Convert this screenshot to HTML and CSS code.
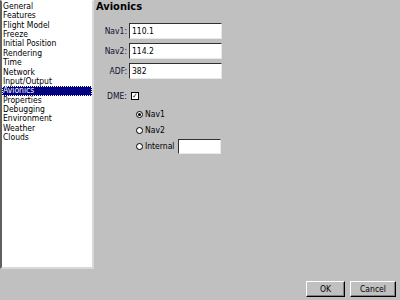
FILE: index.html
```html
<!DOCTYPE html>
<html lang="en">
<head>
    <meta charset="UTF-8">
    <title>Preferences</title>
    <link rel="stylesheet" href="styles.css">
</head>
<body>
    <div class="dialog">
        <div class="main">
            <div class="category-list">
                <div class="item">General</div>
                <div class="item">Features</div>
                <div class="item">Flight Model</div>
                <div class="item">Freeze</div>
                <div class="item">Initial Position</div>
                <div class="item">Rendering</div>
                <div class="item">Time</div>
                <div class="item">Network</div>
                <div class="item">Input/Output</div>
                <div class="item selected">Avionics</div>
                <div class="item">Properties</div>
                <div class="item">Debugging</div>
                <div class="item">Environment</div>
                <div class="item">Weather</div>
                <div class="item">Clouds</div>
            </div>

            <div class="panel">
                <div class="panel-title">Avionics</div>

                <div class="fields">
                    <label class="field-label">Nav1:</label>
                    <div class="text-field">110.1</div>
                    <label class="field-label">Nav2:</label>
                    <div class="text-field">114.2</div>
                    <label class="field-label">ADF:</label>
                    <div class="text-field">382</div>
                </div>

                <div class="dme-row">
                    <span class="field-label">DME:</span>
                    <span class="checkbox">&#10003;</span>
                </div>

                <div class="radio-group">
                    <div class="radio-row"><span class="radio checked"></span>Nav1</div>
                    <div class="radio-row"><span class="radio"></span>Nav2</div>
                    <div class="radio-row"><span class="radio"></span>Internal<div class="text-field small"></div></div>
                </div>
            </div>
        </div>

        <div class="button-bar">
            <button class="btn">OK</button>
            <button class="btn">Cancel</button>
        </div>
    </div>
</body>
</html>
```

FILE: styles.css
```css
* {
    margin: 0;
    padding: 0;
    box-sizing: border-box;
}

body {
    font-family: 'DejaVu Sans Condensed', 'DejaVu Sans', sans-serif;
    font-size: 8.5px;
    background: #c0c0c0;
    color: #000000;
    width: 400px;
    height: 300px;
    overflow: hidden;
}

.dialog {
    display: flex;
    flex-direction: column;
    height: 300px;
}

.main {
    display: flex;
    height: 269px;
}

.category-list {
    width: 94px;
    height: 269px;
    background: #ffffff;
    border-left: 2px solid #606060;
    border-top: 1px solid #ffffff;
    border-right: 2px solid #d8d8d8;
    border-bottom: 2px solid #d8d8d8;
    padding-top: 1px;
}

.item {
    height: 9.36px;
    line-height: 9.36px;
    padding-left: 1px;
    white-space: nowrap;
}

.item.selected {
    background: #000080;
    color: #ffffff;
    outline: 1px dotted #ffffff;
    outline-offset: -1px;
}

.panel {
    flex: 1;
    padding-left: 2px;
}

.panel-title {
    font-size: 11px;
    font-weight: bold;
    height: 13px;
    line-height: 13px;
}

.fields {
    display: grid;
    grid-template-columns: 33px 93px;
    row-gap: 4px;
    align-items: center;
    margin-top: 10px;
}

.field-label {
    text-align: right;
    padding-right: 2px;
    color: #101030;
}

.text-field {
    height: 16px;
    line-height: 14px;
    background: #ffffff;
    border-top: 1px solid #303030;
    border-left: 1px solid #303030;
    border-right: 1px solid #e8e8e8;
    border-bottom: 1px solid #e8e8e8;
    padding-left: 2px;
}

.text-field.small {
    width: 43px;
    height: 15px;
    margin-left: 4px;
}

.dme-row {
    display: flex;
    align-items: center;
    margin-top: 12px;
    padding-left: 11px;
}

.dme-row .field-label {
    padding-right: 4px;
}

.checkbox {
    width: 8px;
    height: 8px;
    background: #ffffff;
    border: 1px solid #000000;
    font-size: 7px;
    line-height: 6px;
    text-align: center;
}

.radio-group {
    margin-top: 5px;
    padding-left: 40px;
}

.radio-row {
    display: flex;
    align-items: center;
    height: 16px;
}

.radio {
    width: 7px;
    height: 7px;
    border-radius: 50%;
    border: 1px solid #000000;
    background: #ffffff;
    margin-right: 2px;
    position: relative;
}

.radio.checked::after {
    content: '';
    position: absolute;
    left: 1px;
    top: 1px;
    width: 3px;
    height: 3px;
    border-radius: 50%;
    background: #000000;
}

.button-bar {
    display: flex;
    justify-content: flex-end;
    gap: 5px;
    padding: 12px 4px 0 0;
}

.btn {
    height: 16px;
    background: #c0c0c0;
    border: 1px solid #000000;
    border-top-color: #ffffff;
    border-left-color: #ffffff;
    box-shadow: inset -1px -1px 0 #808080;
    font-family: 'DejaVu Sans Condensed', 'DejaVu Sans', sans-serif;
    font-size: 8.5px;
    color: #000000;
}

.btn:first-child {
    width: 39px;
}

.btn:last-child {
    width: 46px;
}
```
